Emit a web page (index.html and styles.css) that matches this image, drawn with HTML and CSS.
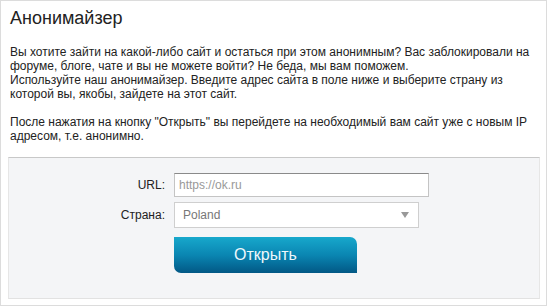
FILE: index.html
```html
<!DOCTYPE html>
<html lang="ru">
<head>
<meta charset="utf-8">
<title>Анонимайзер</title>
<link rel="stylesheet" href="styles.css">
</head>
<body>
<div class="frame">
  <h1 class="title">Анонимайзер</h1>
  <div class="intro">
    Вы хотите зайти на какой-либо сайт и остаться при этом анонимным? Вас заблокировали на форуме, блоге, чате и вы не можете войти? Не беда, мы вам поможем.<br>
    Используйте наш анонимайзер. Введите адрес сайта в поле ниже и выберите страну из которой вы, якобы, зайдете на этот сайт.<br><br>
    После нажатия на кнопку "Открыть" вы перейдете на необходимый вам сайт уже с новым IP адресом, т.е. анонимно.
  </div>
  <form class="panel">
    <div class="row">
      <label class="label" for="url">URL:</label>
      <input class="input" id="url" type="text" placeholder="https://ok.ru">
    </div>
    <div class="row">
      <label class="label">Страна:</label>
      <div class="select">
        <span class="select-value">Poland</span>
        <span class="select-arrow"></span>
      </div>
    </div>
    <div class="row row-btn">
      <span class="label"></span>
      <button class="btn" type="button">Открыть</button>
    </div>
  </form>
</div>
</body>
</html>
```
FILE: styles.css
```css
html, body {
  margin: 0;
  padding: 0;
  background: #fff;
}
body {
  font-family: "Liberation Sans", Arial, sans-serif;
  color: #222;
}
.frame {
  box-sizing: border-box;
  width: 547px;
  height: 306px;
  border: 1px solid #dcdcdc;
  padding: 6px 7px 0 7px;
}
.title {
  margin: 0 0 0 2px;
  font-size: 18px;
  font-weight: normal;
  line-height: 22px;
  color: #222;
}
.intro {
  margin: 16px 0 0 2px;
  font-size: 12px;
  line-height: 14px;
  color: #222;
}
.panel {
  margin-top: 14px;
  height: 142px;
  box-sizing: border-box;
  width: 532px;
  background: #f4f5f7;
  border-top: 1px solid #c8c8c8;
  border-left: 1px solid #e6e6e6;
  border-right: 1px solid #e6e6e6;
  border-bottom: 1px solid #e2e2e2;
  padding-top: 15px;
}
.row {
  display: flex;
  align-items: center;
  margin-bottom: 5px;
}
.label {
  width: 156px;
  text-align: right;
  font-size: 12px;
  color: #222;
  margin-right: 9px;
}
.input {
  box-sizing: border-box;
  width: 255px;
  height: 24px;
  border: 1px solid #c4c4c4;
  border-top-color: #8a8a8a;
  background: #fff;
  padding: 0 4px;
  font-family: "Liberation Sans", Arial, sans-serif;
  font-size: 12px;
  outline: none;
}
.input::placeholder {
  color: #999;
}
.select {
  box-sizing: border-box;
  width: 245px;
  height: 26px;
  border: 1px solid #cfcfcf;
  background: #fff;
  display: flex;
  align-items: center;
  justify-content: space-between;
  padding: 0 9px 0 8px;
}
.select-value {
  font-size: 12px;
  color: #777;
}
.select-arrow {
  width: 0;
  height: 0;
  border-left: 4px solid transparent;
  border-right: 4px solid transparent;
  border-top: 6px solid #999;
}
.row-btn {
  margin-top: 9px;
}
.btn {
  width: 183px;
  height: 36px;
  border: none;
  border-radius: 0 7px 0 7px;
  background: linear-gradient(to bottom, #17a8cc 0%, #0a86b2 50%, #025885 100%);
  color: #eef8fc;
  font-family: "Liberation Sans", Arial, sans-serif;
  font-size: 16px;
  padding: 0;
  cursor: pointer;
}
```
